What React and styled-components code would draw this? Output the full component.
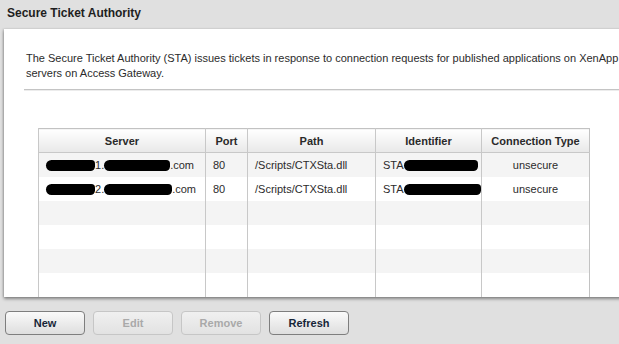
import React from "react";
import styled, { createGlobalStyle } from "styled-components";

const Global = createGlobalStyle`
  html, body { margin: 0; padding: 0; background: #e0e0e0; overflow: hidden; }
  body { font-family: "Liberation Sans", Arial, sans-serif; width: 619px; height: 344px; }
`;

const Page = styled.div`
  display: flex;
  flex-direction: column;
  width: 619px;
  height: 344px;
  overflow: hidden;
`;

const TitleBar = styled.div`
  height: 29px;
  display: flex;
  align-items: center;
  padding: 0 0 3px 7px;
  box-sizing: border-box;
  font-size: 12px;
  font-weight: bold;
  color: #1e1e1e;
`;

const Panel = styled.div`
  margin-left: 4px;
  width: 700px;
  background: #fff;
  box-shadow: 0 2px 3px rgba(0, 0, 0, 0.4), -1px 0 2px rgba(0, 0, 0, 0.15);
  padding-top: 22px;
  display: flex;
  flex-direction: column;
`;

const Description = styled.p`
  margin: 0 0 0 22px;
  width: 605px;
  font-size: 11px;
  line-height: 15px;
  color: #2b2b2b;
`;

const Separator = styled.div`
  margin: 8px 0 0 20px;
  height: 1px;
  background: #c4c4c4;
  border-bottom: 1px solid #ececec;
`;

const Table = styled.table`
  margin: 37px 0 0 34px;
  width: 552px;
  border-collapse: collapse;
  table-layout: fixed;
  border: 1px solid #c2c2c2;
  border-bottom: none;
  font-size: 11px;
  color: #2b2b2b;
`;

const Th = styled.th`
  height: 23px;
  padding: 0;
  font-weight: bold;
  text-align: center;
  background: linear-gradient(#ffffff, #e8e8e8);
  border-left: 1px solid #c8c8c8;
  border-bottom: 1px solid #c8c8c8;
  color: #2a2a2a;
`;

const Row = styled.tr`
  background: ${(p) => (p.$alt ? "#f4f4f4" : "#ffffff")};
`;

const Td = styled.td`
  height: 24px;
  padding: 0 0 0 ${(p) => (p.$center ? 0 : 7)}px;
  text-align: ${(p) => (p.$center ? "center" : "left")};
  border-left: 1px solid #c8c8c8;
  white-space: nowrap;
  overflow: hidden;
`;

const Redact = styled.span`
  display: inline-block;
  vertical-align: middle;
  width: ${(p) => p.$w}px;
  height: 11px;
  margin-top: -2px;
  background: #000;
  border-radius: 6px 4px 5px 6px;
`;

const Buttons = styled.div`
  display: flex;
  gap: 8px;
  margin: 14px 0 0 5px;
`;

const Button = styled.button`
  width: 80px;
  height: 24px;
  padding: 0;
  font-family: "Liberation Sans", Arial, sans-serif;
  font-size: 11px;
  font-weight: bold;
  border-radius: 4px;
  border: 1px solid ${(p) => (p.disabled ? "#c6c6c6" : "#7e7e7e")};
  background: ${(p) =>
    p.disabled ? "linear-gradient(#f0f0f0, #e2e2e2)" : "linear-gradient(#fafafa, #dedede)"};
  color: ${(p) => (p.disabled ? "#a9a9a9" : "#172638")};
`;

const rows = [
  { n: "1", w2: 66, idw: 74 },
  { n: "2", w2: 68, idw: 77 },
];

export default function App() {
  return (
    <>
      <Global />
      <Page>
        <TitleBar>Secure Ticket Authority</TitleBar>
        <Panel>
          <Description>
            The Secure Ticket Authority (STA) issues tickets in response to connection requests for
            published applications on XenApp servers on Access Gateway.
          </Description>
          <Separator />
          <Table>
            <colgroup>
              <col style={{ width: 167 }} />
              <col style={{ width: 42 }} />
              <col style={{ width: 128 }} />
              <col style={{ width: 106 }} />
              <col style={{ width: 108 }} />
            </colgroup>
            <thead>
              <tr>
                <Th>Server</Th>
                <Th>Port</Th>
                <Th>Path</Th>
                <Th>Identifier</Th>
                <Th>Connection Type</Th>
              </tr>
            </thead>
            <tbody>
              {[0, 1, 2, 3, 4, 5].map((i) => {
                const r = rows[i];
                return (
                  <Row key={i} $alt={i % 2 === 0}>
                    <Td>
                      {r && (
                        <>
                          <Redact $w={49} />
                          {r.n}.<Redact $w={r.w2} />
                          .com
                        </>
                      )}
                    </Td>
                    <Td>{r && "80"}</Td>
                    <Td>{r && "/Scripts/CTXSta.dll"}</Td>
                    <Td>
                      {r && (
                        <>
                          STA
                          <Redact $w={r.idw} />
                        </>
                      )}
                    </Td>
                    <Td $center>{r && "unsecure"}</Td>
                  </Row>
                );
              })}
            </tbody>
          </Table>
        </Panel>
        <Buttons>
          <Button>New</Button>
          <Button disabled>Edit</Button>
          <Button disabled>Remove</Button>
          <Button>Refresh</Button>
        </Buttons>
      </Page>
    </>
  );
}
